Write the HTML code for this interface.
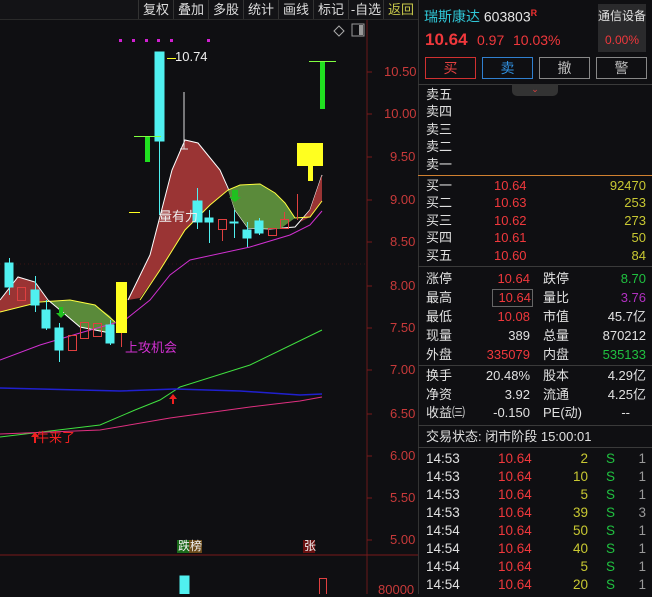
<!DOCTYPE html>
<html><head><meta charset="utf-8"><style>
body{margin:0;width:652px;height:594px;background:#0f0f12;overflow:hidden;position:relative;font-family:"Liberation Sans","Noto Sans CJK SC",sans-serif;font-size:13px;color:#e0e0e0}
.a{position:absolute;white-space:nowrap;line-height:16px}
.r{color:#f0383c}.y{color:#c8c832}.g{color:#20c040}.w{color:#e6e6e6}
.ra{text-align:right}
.hl{position:absolute;left:418px;width:234px;height:1px;background:#3a3a3a}
.btn{position:absolute;top:57px;width:49px;height:20px;border:1px solid #888;text-align:center;line-height:20px;font-size:14px;color:#bbb}
.tb{position:absolute;top:0;height:19px;line-height:19px;font-size:13px;color:#ddd;border-left:1px solid #333;text-align:center}
.ax{position:absolute;left:384px;color:#c83a3a;font-size:13px;line-height:14px}
</style></head><body>
<!-- toolbar -->
<div class="a" style="left:0;top:0;width:418px;height:19px;background:#131316;border-bottom:1px solid #2a2a2a"></div>
<div class="tb" style="left:138px;width:34px">复权</div>
<div class="tb" style="left:173px;width:34px">叠加</div>
<div class="tb" style="left:208px;width:34px">多股</div>
<div class="tb" style="left:243px;width:34px">统计</div>
<div class="tb" style="left:278px;width:34px">画线</div>
<div class="tb" style="left:313px;width:34px">标记</div>
<div class="tb" style="left:348px;width:34px">-自选</div>
<div class="tb" style="left:383px;width:34px;color:#c8c84a">返回</div>
<!-- chart -->
<svg style="position:absolute;left:0;top:0" width="418" height="594">
<line x1="367" y1="20" x2="367" y2="594" stroke="#6a1a1a"/>
<line x1="0" y1="264" x2="367" y2="264" stroke="#3a1414" stroke-dasharray="1,3"/>
<line x1="0" y1="555" x2="418" y2="555" stroke="#7a1a1a"/>
<g stroke="#7a1a1a"><line x1="367" y1="72" x2="372" y2="72"/><line x1="367" y1="114" x2="372" y2="114"/><line x1="367" y1="157" x2="372" y2="157"/><line x1="367" y1="200" x2="372" y2="200"/><line x1="367" y1="242" x2="372" y2="242"/><line x1="367" y1="286" x2="372" y2="286"/><line x1="367" y1="328" x2="372" y2="328"/><line x1="367" y1="370" x2="372" y2="370"/><line x1="367" y1="414" x2="372" y2="414"/><line x1="367" y1="456" x2="372" y2="456"/><line x1="367" y1="498" x2="372" y2="498"/><line x1="367" y1="540" x2="372" y2="540"/></g>
<!-- top icons -->
<path d="M339 26 L344 31 L339 36 L334 31Z" fill="none" stroke="#aaa"/>
<rect x="352" y="24" width="12" height="12" fill="none" stroke="#999"/><rect x="359" y="25" width="4" height="10" fill="#999"/>
<g fill="#d020d0"><rect x="119" y="39" width="3" height="3"/><rect x="132" y="39" width="3" height="3"/><rect x="145" y="39" width="3" height="3"/><rect x="157" y="39" width="3" height="3"/><rect x="170" y="39" width="3" height="3"/><rect x="207" y="39" width="3" height="3"/></g>
<!-- left areas -->
<path d="M0 300 L18 277 L35 282 L48 300 L30 304 L10 310 L0 312Z" fill="#9a3434" stroke="none"/>
<path d="M0 300 L18 277 L35 282 L48 300" fill="none" stroke="#fff"/>
<path d="M40 302 L70 300 L95 305 L110 316 L115 322 L110 333 L80 327 L60 310 L48 300Z" fill="#5a8a3a"/>
<path d="M0 312 L40 302 L70 300 L95 305 L115 322" fill="none" stroke="#ffff40"/>
<path d="M48 300 L60 310 L80 327 L110 333" fill="none" stroke="#fff"/>
<!-- main red area -->
<path d="M128 300 L150 255 L172 170 L185 140 L198 143 L220 170 L228 190 L210 205 L185 230 L160 270 L140 298Z" fill="#9a3434"/>
<path d="M128 300 L150 255 L172 170 L185 140 L198 143 L220 170 L228 188 L235 210 L248 228 L270 229 L295 227 L310 210 L322 175" fill="none" stroke="#fff"/>
<path d="M228 190 L240 185 L260 184 L275 193 L285 203 L295 218 L280 229 L248 228 L235 210Z" fill="#5a8a3a"/>
<path d="M300 222 L310 210 L322 175 L322 201 L310 217Z" fill="#9a3434"/>
<path d="M140 300 L160 270 L185 230 L210 205 L228 190 L240 185 L260 184 L275 193 L285 203 L295 218 L310 217 L322 201" fill="none" stroke="#ffff40"/>
<path d="M0 360 L40 345 L80 333 L125 320 L150 300 L170 275 L190 260 L250 247 L290 235 L310 225 L322 211" fill="none" stroke="#d030d0"/>
<!-- long lines -->
<path d="M0 437 L100 425 L135 410 L160 400 L180 387 L250 365 L322 330" fill="none" stroke="#40e040"/>
<path d="M0 388 L120 391 L175 389 L240 391 L300 395 L322 394" fill="none" stroke="#2020d0" stroke-width="1.5"/>
<path d="M0 434 L100 430 L170 418 L250 407 L300 401 L322 397" fill="none" stroke="#e03080"/>
<path d="M173 394 L169 399 L172 399 L172 404 L174 404 L174 399 L177 399Z" fill="#f02020"/>
<path d="M35 432 L31 437 L34 437 L34 443 L36 443 L36 437 L39 437Z" fill="#f02020"/>
<!-- candles cyan -->
<g fill="#50f0f0" stroke="#50f0f0">
<rect x="155" y="52" width="9" height="89"/><line x1="159.5" y1="141" x2="159.5" y2="215"/>
<rect x="193" y="201" width="9" height="21"/><line x1="197.5" y1="188" x2="197.5" y2="229"/>
<rect x="205" y="218" width="8" height="4"/><line x1="209.5" y1="210" x2="209.5" y2="243"/>
<rect x="230" y="222" width="8" height="1"/><line x1="234.5" y1="210" x2="234.5" y2="238"/>
<rect x="243" y="230" width="8" height="8"/><line x1="247.5" y1="222" x2="247.5" y2="247"/>
<rect x="255" y="221" width="8" height="12"/><line x1="259.5" y1="218" x2="259.5" y2="235"/>
<rect x="5" y="263" width="8" height="24"/><line x1="9.5" y1="258" x2="9.5" y2="295"/>
<rect x="31" y="290" width="8" height="15"/><line x1="35.5" y1="276" x2="35.5" y2="312"/>
<rect x="42" y="310" width="8" height="18"/><line x1="46.5" y1="300" x2="46.5" y2="330"/>
<rect x="55" y="328" width="8" height="22"/><line x1="59.5" y1="323" x2="59.5" y2="362"/>
<rect x="106" y="325" width="8" height="18"/><line x1="110.5" y1="320" x2="110.5" y2="345"/>
<rect x="180" y="576" width="9" height="20"/>
</g>
<g fill="none" stroke="#e04040">
<rect x="218.5" y="219.5" width="8" height="10"/><line x1="222.5" y1="229" x2="222.5" y2="241"/>
<rect x="268.5" y="228.5" width="8" height="7"/>
<rect x="280.5" y="219.5" width="8" height="9"/><line x1="284.5" y1="212" x2="284.5" y2="219"/>
<line x1="297.5" y1="194" x2="297.5" y2="220"/>
<rect x="17.5" y="287.5" width="8" height="13"/>
<rect x="68.5" y="335.5" width="8" height="15"/>
<rect x="80.5" y="322.5" width="8" height="16"/>
<rect x="93.5" y="323.5" width="8" height="13"/>
<line x1="121.5" y1="333" x2="121.5" y2="347"/>
<rect x="319.5" y="578.5" width="7" height="17"/>
</g>
<line x1="184" y1="92" x2="184" y2="149" stroke="#ddd"/><line x1="180" y1="149" x2="188" y2="149" stroke="#ddd"/>
<rect x="116" y="282" width="11" height="51" fill="#ffff20"/>
<rect x="297" y="143" width="26" height="23" fill="#ffff20"/><rect x="308" y="166" width="5" height="15" fill="#ffff20"/>
<rect x="145" y="137" width="5" height="25" fill="#20e020"/><line x1="134" y1="136.5" x2="161" y2="136.5" stroke="#80ff40"/>
<rect x="320" y="62" width="5" height="47" fill="#20e020"/><line x1="309" y1="61.5" x2="336" y2="61.5" stroke="#80ff40"/>
<line x1="129" y1="212.5" x2="140" y2="212.5" stroke="#ffff20"/>
<line x1="167" y1="58.5" x2="176" y2="58.5" stroke="#ffff20"/>
<path d="M232 190 L232 197 L229 197 L235 202 L241 197 L238 197 L238 190Z" fill="#20c020"/>
<path d="M59 307 L59 313 L56 313 L61 318 L66 313 L63 313 L63 307Z" fill="#20c020"/>
<rect x="177" y="540" width="12" height="13" fill="#1a6a1a"/><rect x="189" y="540" width="13" height="13" fill="#6a4a1a"/>
<rect x="303" y="540" width="12" height="13" fill="#6a1010"/>
</svg>
<div class="a" style="left:175px;top:49px;color:#eee">10.74</div>
<div class="a" style="left:159px;top:209px;color:#eee">量有力</div>
<div class="a" style="left:125px;top:340px;color:#d030d0">上攻机会</div>
<div class="a" style="left:36px;top:430px;color:#f02020">牛来了</div>
<div class="a" style="left:178px;top:538px;font-size:12px;color:#eee">跌</div>
<div class="a" style="left:190px;top:538px;font-size:12px;color:#eee">榜</div>
<div class="a" style="left:304px;top:538px;font-size:12px;color:#eee">张</div>
<div class="ax" style="top:65px">10.50</div><div class="ax" style="top:107px">10.00</div>
<div class="ax" style="top:150px;left:390px">9.50</div><div class="ax" style="top:193px;left:390px">9.00</div>
<div class="ax" style="top:235px;left:390px">8.50</div><div class="ax" style="top:279px;left:390px">8.00</div>
<div class="ax" style="top:321px;left:390px">7.50</div><div class="ax" style="top:363px;left:390px">7.00</div>
<div class="ax" style="top:407px;left:390px">6.50</div><div class="ax" style="top:449px;left:390px">6.00</div>
<div class="ax" style="top:491px;left:390px">5.50</div><div class="ax" style="top:533px;left:390px">5.00</div>
<div class="ax" style="top:583px;left:378px">80000</div>
<!-- right panel -->
<div class="a" style="left:418px;top:0;width:1px;height:594px;background:#333"></div>
<div class="a" style="left:424px;top:5px;font-size:14px"><span style="color:#30c8d8">瑞斯康达</span> <span class="w">603803</span><sup style="color:#f03030;font-size:9px;font-weight:bold">R</sup></div>
<div class="a" style="left:598px;top:4px;width:48px;height:48px;background:#2a2a2c"></div>
<div class="a" style="left:598px;top:8px;width:48px;text-align:center;font-size:12px">通信设备</div>
<div class="a" style="left:598px;top:32px;width:48px;text-align:center;font-size:12px" ><span class="r">0.00%</span></div>
<div class="a r" style="left:425px;top:30px;font-size:17px;font-weight:bold;line-height:20px">10.64</div>
<div class="a r" style="left:477px;top:32px;font-size:14px">0.97</div>
<div class="a r" style="left:513px;top:32px;font-size:14px">10.03%</div>
<div class="btn" style="left:425px;border-color:#d03030;color:#e04040">买</div>
<div class="btn" style="left:482px;border-color:#3080d0;color:#3090e0">卖</div>
<div class="btn" style="left:539px">撤</div>
<div class="btn" style="left:596px">警</div>
<div class="hl" style="top:84px"></div>
<div class="a" style="left:512px;top:84px;width:46px;height:12px;background:#333;border-radius:0 0 5px 5px;color:#e04040;font-size:9px;text-align:center;line-height:11px">⌄</div>
<div class="a" style="left:426px;top:87px">卖五</div>
<div class="a" style="left:426px;top:104px">卖四</div>
<div class="a" style="left:426px;top:122px">卖三</div>
<div class="a" style="left:426px;top:139px">卖二</div>
<div class="a" style="left:426px;top:157px">卖一</div>
<div class="a" style="left:418px;top:175px;width:234px;height:1px;background:#d08030"></div>
<div class="a" style="left:426px;top:178px">买一</div><div class="a r" style="left:494px;top:178px">10.64</div><div class="a y ra" style="left:580px;top:178px;width:66px">92470</div>
<div class="a" style="left:426px;top:195px">买二</div><div class="a r" style="left:494px;top:195px">10.63</div><div class="a y ra" style="left:580px;top:195px;width:66px">253</div>
<div class="a" style="left:426px;top:213px">买三</div><div class="a r" style="left:494px;top:213px">10.62</div><div class="a y ra" style="left:580px;top:213px;width:66px">273</div>
<div class="a" style="left:426px;top:230px">买四</div><div class="a r" style="left:494px;top:230px">10.61</div><div class="a y ra" style="left:580px;top:230px;width:66px">50</div>
<div class="a" style="left:426px;top:248px">买五</div><div class="a r" style="left:494px;top:248px">10.60</div><div class="a y ra" style="left:580px;top:248px;width:66px">84</div>
<div class="hl" style="top:266px"></div>
<div class="a" style="left:426px;top:271px">涨停</div><div class="a r ra" style="left:470px;top:271px;width:60px">10.64</div><div class="a" style="left:543px;top:271px">跌停</div><div class="a g ra" style="left:580px;top:271px;width:66px">8.70</div>
<div class="a" style="left:426px;top:290px">最高</div><div class="a r ra" style="left:492px;top:289px;width:38px;border:1px solid #666;padding-right:1px">10.64</div><div class="a" style="left:543px;top:290px">量比</div><div class="a ra" style="left:580px;top:290px;width:66px;color:#b030c0">3.76</div>
<div class="a" style="left:426px;top:309px">最低</div><div class="a r ra" style="left:470px;top:309px;width:60px">10.08</div><div class="a" style="left:543px;top:309px">市值</div><div class="a ra" style="left:580px;top:309px;width:66px">45.7亿</div>
<div class="a" style="left:426px;top:328px">现量</div><div class="a ra" style="left:470px;top:328px;width:60px">389</div><div class="a" style="left:543px;top:328px">总量</div><div class="a ra" style="left:580px;top:328px;width:66px">870212</div>
<div class="a" style="left:426px;top:347px">外盘</div><div class="a r ra" style="left:470px;top:347px;width:60px">335079</div><div class="a" style="left:543px;top:347px">内盘</div><div class="a g ra" style="left:580px;top:347px;width:66px">535133</div>
<div class="hl" style="top:365px"></div>
<div class="a" style="left:426px;top:368px">换手</div><div class="a ra" style="left:470px;top:368px;width:60px">20.48%</div><div class="a" style="left:543px;top:368px">股本</div><div class="a ra" style="left:580px;top:368px;width:66px">4.29亿</div>
<div class="a" style="left:426px;top:387px">净资</div><div class="a ra" style="left:470px;top:387px;width:60px">3.92</div><div class="a" style="left:543px;top:387px">流通</div><div class="a ra" style="left:580px;top:387px;width:66px">4.25亿</div>
<div class="a" style="left:426px;top:405px">收益㈢</div><div class="a ra" style="left:470px;top:405px;width:60px">-0.150</div><div class="a" style="left:543px;top:405px">PE(动)</div><div class="a ra" style="left:580px;top:405px;width:50px">--</div>
<div class="hl" style="top:425px"></div>
<div class="a" style="left:426px;top:429px">交易状态: 闭市阶段 15:00:01</div>
<div class="hl" style="top:447px"></div>
<div style="position:absolute;left:426px;top:450px;width:222px;line-height:18px;font-size:13.5px">
<div style="position:relative;height:18px"><span style="position:absolute;left:0">14:53</span><span class="r" style="position:absolute;left:72px">10.64</span><span class="y" style="position:absolute;right:60px">2</span><span class="g" style="position:absolute;left:180px">S</span><span style="position:absolute;right:2px;color:#999">1</span></div>
<div style="position:relative;height:18px"><span style="position:absolute;left:0">14:53</span><span class="r" style="position:absolute;left:72px">10.64</span><span class="y" style="position:absolute;right:60px">10</span><span class="g" style="position:absolute;left:180px">S</span><span style="position:absolute;right:2px;color:#999">1</span></div>
<div style="position:relative;height:18px"><span style="position:absolute;left:0">14:53</span><span class="r" style="position:absolute;left:72px">10.64</span><span class="y" style="position:absolute;right:60px">5</span><span class="g" style="position:absolute;left:180px">S</span><span style="position:absolute;right:2px;color:#999">1</span></div>
<div style="position:relative;height:18px"><span style="position:absolute;left:0">14:53</span><span class="r" style="position:absolute;left:72px">10.64</span><span class="y" style="position:absolute;right:60px">39</span><span class="g" style="position:absolute;left:180px">S</span><span style="position:absolute;right:2px;color:#999">3</span></div>
<div style="position:relative;height:18px"><span style="position:absolute;left:0">14:54</span><span class="r" style="position:absolute;left:72px">10.64</span><span class="y" style="position:absolute;right:60px">50</span><span class="g" style="position:absolute;left:180px">S</span><span style="position:absolute;right:2px;color:#999">1</span></div>
<div style="position:relative;height:18px"><span style="position:absolute;left:0">14:54</span><span class="r" style="position:absolute;left:72px">10.64</span><span class="y" style="position:absolute;right:60px">40</span><span class="g" style="position:absolute;left:180px">S</span><span style="position:absolute;right:2px;color:#999">1</span></div>
<div style="position:relative;height:18px"><span style="position:absolute;left:0">14:54</span><span class="r" style="position:absolute;left:72px">10.64</span><span class="y" style="position:absolute;right:60px">5</span><span class="g" style="position:absolute;left:180px">S</span><span style="position:absolute;right:2px;color:#999">1</span></div>
<div style="position:relative;height:18px"><span style="position:absolute;left:0">14:54</span><span class="r" style="position:absolute;left:72px">10.64</span><span class="y" style="position:absolute;right:60px">20</span><span class="g" style="position:absolute;left:180px">S</span><span style="position:absolute;right:2px;color:#999">1</span></div>
</div>
</body></html>
